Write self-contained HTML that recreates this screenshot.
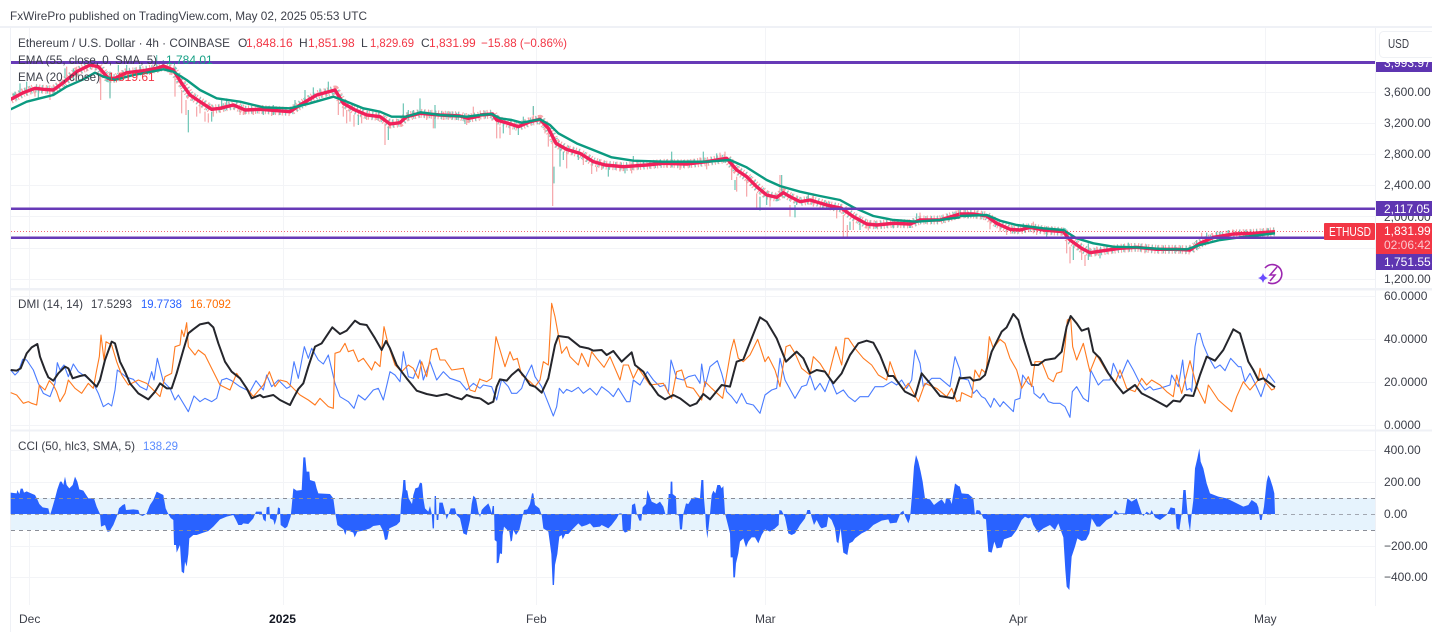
<!DOCTYPE html>
<html><head><meta charset="utf-8"><title>ETHUSD</title>
<style>
html,body{margin:0;padding:0;background:#fff;width:1432px;height:632px;overflow:hidden}
#root{display:block;position:absolute;left:0;top:0;filter:blur(.35px)}
text{font-family:"Liberation Sans",sans-serif;font-size:12px;fill:#3c3f49}
polyline{fill:none;vector-effect:non-scaling-stroke;stroke-linejoin:round}
.r{stroke:#f0205a;stroke-width:3.4}
.t{stroke:#0b9a80;stroke-width:2.4}
.k{stroke:#25262c;stroke-width:2}
.b{stroke:#4a7cff;stroke-width:1.1}
.o{stroke:#ff7a1f;stroke-width:1.1}
.tp{stroke:#f6a5a8;stroke-width:9;stroke-dasharray:1.1 2.3;fill:none}
.tg{stroke:#7ccdbf;stroke-width:8;stroke-dasharray:1.1 4.6;stroke-dashoffset:1;fill:none}
.pk{stroke:#f6a5a8;stroke-width:1.2;fill:none;vector-effect:non-scaling-stroke}
.gr{stroke:#6cc5b5;stroke-width:1.2;fill:none;vector-effect:non-scaling-stroke}
.cc{fill:#2962ff}
</style></head><body>
<svg id="root" width="1432" height="632" viewBox="0 0 1432 632" xmlns="http://www.w3.org/2000/svg">
<defs>
<clipPath id="pane"><rect x="11" y="28" width="1364" height="260"/></clipPath>
<polyline id="r1" points="32,298 70,278 105,265 130,268 160,270 190,248 230,215 270,195 295,200 325,235 345,235 380,218 430,212 470,205 490,198 520,210 545,250 570,285 600,305 635,328 660,325 700,315 735,330 780,328 870,335 900,315 950,285 1005,270 1030,310 1065,330 1100,345 1140,350 1170,372 1200,368 1220,350 1260,340 1320,345 1380,348 1405,355 1440,348"/>
<polyline id="r2" points="0,105 38,102 50,120 85,130 115,140 150,125 180,118 205,145 228,190 260,208 300,220 340,245 375,255 430,260 500,255 550,250 620,252 680,245 740,235 770,270 800,290 830,320 860,345 890,352 910,338 930,350 960,365 990,360 1040,375 1085,385 1120,410 1160,432 1190,435 1240,430 1290,432 1320,420 1380,420 1440,402"/>
<polyline id="r3" points="180,72 220,72 260,78 290,100 330,118 360,120 390,112 430,120 490,125 510,150 545,175 570,188 610,182 660,175 710,172 770,178 830,178 870,180 900,160 940,142 1000,132 1060,130 1125,125"/>
</defs>
<rect width="1432" height="632" fill="#fff"/>

<!-- grid -->
<g stroke="#f3f4f7" stroke-width="1" fill="none">
<path d="M29.5 28V605M283.5 28V605M536.5 28V605M765.5 28V605M1019.5 28V605M1265.5 28V605"/>
<path d="M11 92.5H1375M11 123.5H1375M11 154.5H1375M11 185.5H1375M11 216.5H1375M11 248.5H1375M11 279.5H1375M11 296.5H1375M11 339.5H1375M11 382.5H1375M11 425.5H1375M11 450.5H1375M11 482.5H1375M11 546.5H1375M11 577.5H1375"/>
</g>
<!-- borders -->
<g fill="#eff1f6">
<rect x="0" y="26" width="1432" height="2"/>
<rect x="10" y="26" width="1" height="606"/>
<rect x="1375" y="26" width="1" height="580"/>
<rect x="11" y="288" width="1421" height="2.5"/>
<rect x="11" y="429.5" width="1421" height="2"/>
</g>

<!-- main pane -->
<g clip-path="url(#pane)">
<g transform="scale(.33333)">
<use href="#r1" class="tp"/><use href="#r1" class="tg"/>
<path class="pk" d="M302 195V300M330 240V290M525 230V290M545 270V340M558 300V345M590 320V350M615 335V365M625 340V368M720 320V345M760 330V345M815 320V348M1015 300V345M1040 330V370M1062 345V380M1085 345V370M1155 370V435M1300 340V385M1400 350V375M150 265V300M105 270V290M200 200V240M230 200V230M300 220V250M1420 320V345M1030 320V350M1050 335V365M1100 340V360M1130 340V360M1280 335V360M1330 335V360M600 310V340M640 320V350M730 325V345M510 200V225M260 195V215"/>
<path class="gr" d="M565 330V397M490 180V210M195 205V230M220 205V240M470 165V205M355 195V215M380 195V220M420 195V215M330 215V295M915 270V315M940 262V290M985 245V270M885 300V325M1210 310V350M1260 295V335M1305 315V385M1165 380V420M1075 345V375M1225 330V355M680 295V330M665 295V330M820 315V345M60 250V280M80 245V275M115 260V295M635 335V365M1350 335V355M1395 350V372M40 280V300M45 275V295M900 305V325M960 265V285M1240 330V350M1370 338V360M790 320V345M840 322V345"/>
<use href="#r1" class="r"/>
<polyline class="t" points="32,328 80,305 120,295 160,285 200,260 250,238 285,218 310,230 345,240 400,225 440,218 490,208 520,215 560,240 600,270 650,295 720,305 790,322 870,325 930,310 1000,290 1040,305 1090,325 1140,335 1175,350 1220,350 1262,337 1320,345 1400,350 1440,345"/>
</g>
<g transform="translate(480,80) scale(.33333)">
<use href="#r2" class="tp"/><use href="#r2" class="tg"/>
<path class="pk" d="M218 175V378M205 130V200M50 110V175M60 140V175M90 130V165M160 80V120M175 105V125M195 130V160M260 215V265M310 230V255M335 245V282M350 260V275M455 250V280M510 240V260M600 250V270M680 250V268M735 215V245M755 250V300M770 290V335M800 300V350M830 340V385M870 350V380M900 285V335M930 375V410M1000 340V380M1070 385V415M1090 405V470M1102 435V470M1120 425V450M1165 430V452M1320 398V420M1435 390V415M720 218V240M660 232V250M365 255V270M420 258V275M560 250V262M640 238V252"/>
<path class="gr" d="M222 260V310M240 200V260M250 215V240M295 215V240M385 255V290M435 255V280M460 228V245M575 215V260M670 215V250M765 300V330M840 350V392M860 350V375M905 285V335M945 375V412M985 340V365M1040 365V385M1110 425V450M1140 425V450M1190 428V445M1240 430V445M1310 400V425M1425 395V415M160 78V105M710 220V240M950 355V375M130 110V135M115 140V165M70 125V160M490 245V262M540 240V258"/>
<use href="#r2" class="r"/>
<polyline class="t" points="0,105 35,102 60,115 95,120 125,128 180,118 210,135 235,160 290,190 340,210 395,232 460,242 550,245 680,245 750,240 800,262 860,300 900,318 960,335 1020,348 1080,360 1120,382 1180,408 1240,420 1310,425 1380,420 1440,412"/>
</g>
<g transform="translate(900,190) scale(.33333)">
<use href="#r3" class="tp"/><use href="#r3" class="tg"/>
<path class="pk" d="M270 90V118M300 110V125M320 120V135M400 95V130M410 115V135M500 145V190M510 170V220M545 180V210M555 195V228M590 170V195M735 175V190M870 170V188M890 150V165M905 128V145M1000 120V138M1100 118V135M1120 118V130M225 65V80"/>
<path class="gr" d="M180 60V75M205 65V85M345 115V130M370 100V120M440 125V140M520 170V210M565 160V210M600 175V205M685 158V178M890 150V180M960 125V140M1040 122V138M1105 115V130M920 128V145M1070 122V135M830 172V185M950 125V140M985 120V135"/>
<use href="#r3" class="r"/>
<polyline class="t" points="180,78 260,75 300,92 350,105 430,115 490,120 530,145 580,160 640,170 710,172 800,178 860,178 900,165 960,150 1020,142 1125,130"/>
</g>
</g>
<!-- price line & level lines -->
<line x1="11" y1="231.5" x2="1324" y2="231.5" stroke="#f23645" stroke-width="1" stroke-dasharray="1 2" opacity=".75"/>
<rect x="11" y="61" width="1364" height="3" fill="#673ab7"/>
<rect x="11" y="207.5" width="1364" height="2.5" fill="#673ab7"/>
<rect x="11" y="236.5" width="1364" height="2.5" fill="#673ab7"/>

<!-- AI icon -->
<g fill="none" stroke="#9c27b0" stroke-width="1.6">
<path d="M1265 268A9.5 9.5 0 1 1 1268 282.5"/>
<path d="M1277 267L1270 275H1275L1270 281" stroke-width="1.5"/>
</g>
<path d="M1263 273Q1264 277 1268 278Q1264 279 1263 283Q1262 279 1258 278Q1262 277 1263 273Z" fill="#6a4cff"/>

<!-- DMI -->
<g transform="translate(0,290) scale(.33333)">
<polyline class="b" points="32,240 45,255 55,245 68,208 80,210 100,240 115,280 130,310 150,320 165,280 172,218 180,240 192,225 205,260 220,222 235,245 260,262 280,280 295,310 310,350 325,340 335,348 345,300 352,240 380,262 400,268 420,290 440,300 455,245 462,270 472,205 490,275 510,295 525,330 535,315 565,365 582,318 600,335 615,325 635,335 650,325 665,270 680,265 695,272 720,290 750,305 768,272 790,300 800,255 815,290 835,270 860,295 870,290 882,215 895,265 913,170 925,205 935,175 955,210 970,222 985,195 1005,280 1020,320 1045,335 1062,355 1075,315 1095,330 1120,300 1135,295 1150,330 1170,245 1185,255 1200,275 1210,185 1225,260 1240,265 1260,210 1270,270 1290,215 1310,270 1330,245 1350,265 1380,275 1400,300 1420,280 1440,295"/>
<polyline class="o" points="32,308 50,315 70,340 85,335 95,340 110,345 118,285 135,300 148,272 160,285 170,305 180,335 195,310 205,270 225,295 245,310 265,280 280,295 290,240 298,200 303,135 312,210 318,155 335,165 350,215 365,255 385,285 415,270 440,280 460,300 480,320 495,260 515,250 525,170 540,165 545,120 552,140 560,98 565,170 585,195 595,180 615,195 635,235 660,285 690,300 710,250 730,280 760,320 790,285 808,245 825,290 840,270 860,275 880,295 900,315 925,330 945,345 960,325 985,350 1000,355 1005,190 1020,185 1035,160 1045,185 1060,180 1075,215 1090,205 1115,240 1125,215 1140,230 1152,110 1165,165 1185,225 1205,245 1225,225 1240,235 1255,265 1265,215 1280,260 1295,180 1310,175 1320,210 1335,210 1355,240 1390,235 1410,300 1425,305 1440,265"/>
<polyline class="k" points="32,240 50,242 62,235 80,190 95,172 112,162 120,200 135,240 145,262 160,272 175,250 195,230 205,235 218,265 240,258 255,255 275,275 290,290 300,270 315,210 335,155 345,160 360,215 375,245 390,280 415,310 445,328 465,305 480,280 500,295 515,295 530,250 550,180 565,130 580,118 600,103 625,98 640,112 655,160 675,215 695,245 720,265 740,295 755,325 780,315 790,322 820,315 840,330 870,345 880,325 895,297 910,280 925,230 945,170 965,160 985,130 997,112 1020,132 1040,122 1065,92 1080,102 1100,105 1125,145 1145,180 1158,153 1170,175 1190,225 1205,245 1220,265 1250,302 1280,312 1310,318 1340,312 1365,322 1385,328 1400,315 1420,322 1440,325"/>
</g>
<g transform="translate(480,290) scale(.33333)">
<polyline class="b" points="0,295 10,285 35,290 50,330 65,268 85,290 95,310 110,310 125,295 135,265 155,225 165,260 185,290 205,340 220,378 230,350 238,295 250,310 260,298 275,305 295,292 310,310 330,295 350,315 365,290 385,305 400,320 415,295 440,335 450,335 460,270 480,285 502,245 520,270 540,290 555,285 565,310 573,210 590,265 610,270 625,260 645,255 660,280 665,222 675,290 690,230 712,212 725,250 740,305 755,320 770,340 785,310 800,340 820,345 840,370 855,315 875,300 890,295 900,205 915,270 945,325 965,290 980,285 990,255 1005,300 1020,280 1035,305 1050,265 1070,312 1090,300 1105,320 1125,335 1140,320 1165,320 1185,290 1210,290 1235,275 1250,285 1265,270 1280,295 1295,270 1305,180 1320,220 1330,290 1355,265 1380,265 1410,290 1425,200 1440,240"/>
<polyline class="o" points="0,268 20,275 35,265 48,140 60,180 75,230 90,185 100,210 112,205 125,255 150,275 165,290 180,270 190,215 205,225 215,40 225,80 235,135 245,190 260,170 270,200 295,225 305,190 325,230 335,185 350,205 372,232 390,200 420,270 430,225 445,225 460,265 475,235 510,285 550,280 575,325 590,245 605,240 620,290 640,295 665,330 675,275 695,295 728,325 752,185 762,148 775,205 790,215 810,195 833,148 855,215 865,200 885,240 900,290 918,170 930,165 945,190 965,235 990,255 1000,200 1020,220 1045,260 1068,170 1085,225 1095,145 1105,145 1125,175 1150,205 1175,225 1195,255 1220,270 1230,215 1250,270 1270,300 1285,280 1315,335 1335,280 1370,295 1400,320 1415,295 1430,335 1440,330"/>
<polyline class="k" points="0,325 25,342 40,335 50,290 60,268 80,272 95,255 115,238 135,262 150,285 165,290 185,308 205,265 225,165 235,138 265,142 300,170 325,175 340,182 365,180 380,195 400,183 425,215 455,187 465,225 490,245 510,280 535,315 555,328 580,315 600,325 630,348 650,340 670,312 690,328 725,285 750,290 770,215 790,208 815,145 840,82 860,95 890,145 918,215 950,185 970,205 990,250 1010,240 1035,245 1060,280 1085,250 1110,195 1135,160 1160,152 1180,158 1200,195 1225,258 1240,258 1275,305 1305,320 1325,250 1350,280 1380,318 1420,325 1440,260"/>
</g>
<g transform="translate(960,290) scale(.33333)">
<polyline class="b" points="0,240 3,265 25,270 40,310 50,300 65,320 75,325 92,352 102,325 120,350 130,335 160,365 165,330 180,325 188,255 205,280 220,290 222,310 240,325 250,310 265,335 280,340 300,340 315,350 330,382 337,305 350,290 370,325 385,335 392,240 415,285 430,270 450,270 460,220 480,265 503,210 520,240 540,280 555,300 570,290 580,300 600,295 630,285 635,255 655,290 668,210 672,250 680,300 690,295 695,305 705,170 712,132 720,130 730,165 745,200 765,235 780,225 795,242 812,205 835,230 843,230 855,275 870,250 885,280 903,320 925,252 945,278"/>
<polyline class="o" points="0,335 5,308 35,322 45,240 58,262 65,238 78,250 88,140 100,175 120,148 135,160 150,205 170,240 185,295 205,260 215,290 225,215 245,215 265,265 280,275 290,250 305,245 315,170 322,90 332,85 338,170 350,210 370,160 385,225 390,245 410,195 440,245 465,280 480,240 500,295 525,305 545,265 560,285 575,270 600,285 620,305 640,320 650,255 665,310 690,212 700,250 710,290 735,340 745,285 775,330 815,365 830,320 850,275 870,300 895,270 900,235 915,275 935,300 945,295"/>
<polyline class="k" points="0,265 30,262 40,272 60,268 75,255 95,185 125,125 140,112 160,72 175,90 190,145 215,225 235,225 255,210 285,205 305,185 320,110 332,78 350,100 365,122 385,115 400,185 420,205 445,250 470,285 490,310 525,285 545,310 575,325 620,350 640,332 660,335 675,315 700,318 720,255 740,200 765,212 790,180 820,118 840,130 865,215 880,240 895,270 910,265 945,292"/>
</g>

<!-- CCI band -->
<rect x="11" y="498" width="1364" height="32" fill="#e6f3fd"/>
<g transform="translate(0,430) scale(.33333)">
<polygon class="cc" points="32,252 32,188 50,190 52,180 58,192 62,176 68,176 72,188 80,184 88,188 105,195 112,208 118,222 128,232 145,235 150,256 155,240 165,205 172,178 180,155 185,155 190,165 195,140 200,165 208,175 218,165 225,140 232,155 238,178 250,182 265,205 282,205 290,230 300,252 303,290 315,285 322,305 328,305 340,285 352,255 357,235 368,225 375,222 378,240 400,238 415,240 420,255 428,258 440,250 450,225 460,210 470,185 480,190 490,195 497,235 505,252 512,264 520,270 522,345 528,345 530,368 540,345 545,425 552,430 555,395 560,410 565,372 568,325 580,315 590,315 610,308 625,303 640,290 660,268 680,260 700,255 708,270 715,285 725,285 730,280 745,282 760,265 768,245 785,245 790,268 797,275 800,232 808,230 810,265 820,270 824,285 830,265 834,232 840,235 842,285 855,295 862,290 872,260 875,230 880,175 890,182 905,180 910,82 916,82 920,125 928,125 930,150 945,155 950,175 955,190 990,192 1000,205 1006,250 1012,285 1030,298 1036,315 1040,300 1060,308 1064,322 1072,305 1090,302 1110,295 1120,288 1140,285 1150,305 1155,330 1162,328 1168,295 1190,285 1200,275 1204,210 1208,180 1210,150 1216,150 1218,180 1222,182 1226,205 1236,222 1240,195 1246,175 1255,172 1260,158 1266,160 1270,205 1275,235 1285,245 1290,228 1295,250 1298,295 1302,295 1304,198 1308,198 1310,270 1315,270 1318,218 1328,218 1335,245 1340,268 1345,255 1352,235 1365,235 1370,255 1380,265 1390,310 1400,315 1410,270 1415,222 1420,197 1428,205 1435,245 1440,262 1440,252"/>
</g>
<g transform="translate(480,430) scale(.33333)">
<polygon class="cc" points="0,252 0,262 5,240 12,232 25,220 30,232 35,250 38,228 42,228 44,330 50,335 50,400 56,398 60,370 66,372 68,315 72,290 80,298 88,305 92,335 96,332 100,300 108,315 118,300 125,270 132,240 142,238 150,222 156,190 160,190 165,225 178,235 185,255 190,295 205,305 210,342 214,372 218,465 222,465 225,405 232,372 238,320 245,315 248,328 256,312 265,312 280,295 295,280 305,290 320,285 330,280 340,292 360,290 365,285 385,295 395,285 410,265 418,250 425,250 428,300 435,308 442,305 452,298 456,225 465,220 470,250 478,272 484,272 488,232 498,222 502,180 508,195 515,215 530,222 540,215 550,230 556,252 562,255 566,192 571,192 572,155 577,155 578,192 588,200 590,252 597,258 600,298 606,298 610,252 618,220 625,222 635,205 645,202 660,205 664,150 670,150 672,205 676,252 678,290 682,325 686,290 690,252 695,195 700,182 706,190 712,165 720,165 725,175 730,168 735,250 745,290 750,310 752,382 758,382 760,442 765,442 768,400 775,370 780,335 790,325 798,352 805,335 815,322 825,322 835,340 845,315 855,298 870,305 885,295 896,285 898,240 905,242 915,262 925,310 935,315 945,310 960,285 975,265 982,240 990,240 995,262 1002,285 1010,270 1020,290 1025,295 1040,290 1045,260 1055,270 1065,295 1070,335 1075,340 1082,295 1090,368 1102,375 1108,340 1118,335 1125,325 1145,310 1165,300 1180,285 1205,272 1225,268 1230,280 1250,278 1262,248 1270,242 1275,258 1285,280 1290,265 1296,195 1302,110 1308,75 1315,95 1322,125 1328,155 1335,205 1350,208 1362,225 1375,215 1385,208 1395,222 1398,205 1410,208 1415,222 1425,160 1435,168 1440,170 1440,252"/>
</g>
<g transform="translate(960,430) scale(.33333)">
<polygon class="cc" points="0,252 0,172 5,190 25,192 40,205 45,255 50,240 60,242 70,265 78,268 82,325 85,365 95,368 103,335 110,355 125,352 132,328 155,320 170,300 185,270 195,260 205,265 212,262 220,285 235,308 250,295 270,285 285,300 295,280 302,300 310,322 316,420 320,470 328,480 335,380 345,350 352,325 365,333 378,330 388,310 395,265 410,290 420,290 440,270 455,262 465,240 475,250 495,250 502,205 515,215 530,205 545,250 550,258 560,245 570,252 575,240 585,262 600,270 620,255 632,232 645,235 650,295 658,300 665,250 670,180 677,180 680,220 685,275 690,305 695,250 700,210 705,115 712,85 718,55 722,95 730,115 740,160 750,190 775,200 800,205 820,215 850,230 865,225 875,210 890,220 895,232 900,270 905,270 912,230 920,155 925,135 930,145 938,170 943,190 945,252"/>
</g>
<g stroke="#8b8e97" stroke-width="1" stroke-dasharray="4 4" fill="none">
<path d="M11 498.5H1375M11 530.5H1375"/>
<path d="M11 514.5H1375" opacity=".75"/>
</g>

<!-- Legends -->
<text x="10" y="20" textLength="357" lengthAdjust="spacingAndGlyphs">FxWirePro published on TradingView.com, May 02, 2025 05:53 UTC</text>
<text x="18" y="47" textLength="212" lengthAdjust="spacingAndGlyphs">Ethereum / U.S. Dollar · 4h · COINBASE</text>
<text x="238" y="47">O</text><text x="246" y="47" style="fill:#f23645">1,848.16</text>
<text x="299" y="47">H</text><text x="308" y="47" style="fill:#f23645">1,851.98</text>
<text x="361" y="47">L</text><text x="370" y="47" style="fill:#f23645" textLength="44" lengthAdjust="spacingAndGlyphs">1,829.69</text>
<text x="421" y="47">C</text><text x="429" y="47" style="fill:#f23645">1,831.99</text>
<text x="481" y="47" style="fill:#f23645" textLength="86" lengthAdjust="spacingAndGlyphs">−15.88 (−0.86%)</text>
<text x="18" y="64" textLength="139" lengthAdjust="spacingAndGlyphs">EMA (55, close, 0, SMA, 5)</text>
<text x="166" y="64" style="fill:#16a085">1,784.01</text>
<text x="18" y="81" textLength="82" lengthAdjust="spacingAndGlyphs">EMA (20, close)</text>
<text x="108" y="81" style="fill:#f23645">1,819.61</text>
<text x="18" y="308" textLength="65" lengthAdjust="spacingAndGlyphs">DMI (14, 14)</text>
<text x="91" y="308" textLength="41" lengthAdjust="spacingAndGlyphs">17.5293</text>
<text x="141" y="308" textLength="41" lengthAdjust="spacingAndGlyphs" style="fill:#2962ff">19.7738</text>
<text x="190" y="308" textLength="41" lengthAdjust="spacingAndGlyphs" style="fill:#ff6d00">16.7092</text>
<text x="18" y="450" textLength="117" lengthAdjust="spacingAndGlyphs">CCI (50, hlc3, SMA, 5)</text>
<text x="143" y="450" textLength="35" lengthAdjust="spacingAndGlyphs" style="fill:#5b8cff">138.29</text>

<!-- USD button -->
<rect x="1379.5" y="31.5" width="60" height="26" rx="4" fill="#fff" stroke="#eff1f5"/>
<text x="1388" y="48" textLength="21" lengthAdjust="spacingAndGlyphs" style="font-size:13px">USD</text>

<!-- Price axis labels -->
<g>
<text x="1384" y="96">3,600.00</text>
<text x="1384" y="127">3,200.00</text>
<text x="1384" y="158">2,800.00</text>
<text x="1384" y="189">2,400.00</text>
<text x="1384" y="221">2,000.00</text>
<text x="1384" y="283">1,200.00</text>
<text x="1384" y="300">60.0000</text>
<text x="1384" y="343">40.0000</text>
<text x="1384" y="386">20.0000</text>
<text x="1384" y="429">0.0000</text>
<text x="1384" y="454">400.00</text>
<text x="1384" y="486">200.00</text>
<text x="1384" y="518">0.00</text>
<text x="1384" y="550">−200.00</text>
<text x="1384" y="581">−400.00</text>
</g>
<svg x="1376" y="62" width="56" height="10" viewBox="1376 62 56 10">
<rect x="1376" y="62" width="56" height="10" fill="#5e35b1"/>
<text x="1384" y="67" style="fill:#fff">3,993.97</text>
</svg>
<rect x="1376" y="201" width="56" height="15" fill="#5e35b1"/>
<text x="1384" y="213" style="fill:#fff">2,117.05</text>
<rect x="1324" y="223" width="51" height="17" rx="1" fill="#f23645"/>
<text x="1329" y="236" style="fill:#fff;font-size:13px" textLength="42" lengthAdjust="spacingAndGlyphs">ETHUSD</text>
<rect x="1376" y="223" width="56" height="31" fill="#f23645"/>
<text x="1384" y="235" style="fill:#fff">1,831.99</text>
<text x="1384" y="249" style="fill:#fbc9ce">02:06:42</text>
<rect x="1376" y="254" width="56" height="16" fill="#5e35b1"/>
<text x="1384" y="266" style="fill:#fff">1,751.55</text>

<!-- Time axis -->
<text x="19" y="623">Dec</text>
<text x="269" y="623" style="font-weight:bold;fill:#131722" textLength="27" lengthAdjust="spacingAndGlyphs">2025</text>
<text x="526" y="623">Feb</text>
<text x="755" y="623">Mar</text>
<text x="1009" y="623">Apr</text>
<text x="1254" y="623">May</text>
</svg>
</body></html>
